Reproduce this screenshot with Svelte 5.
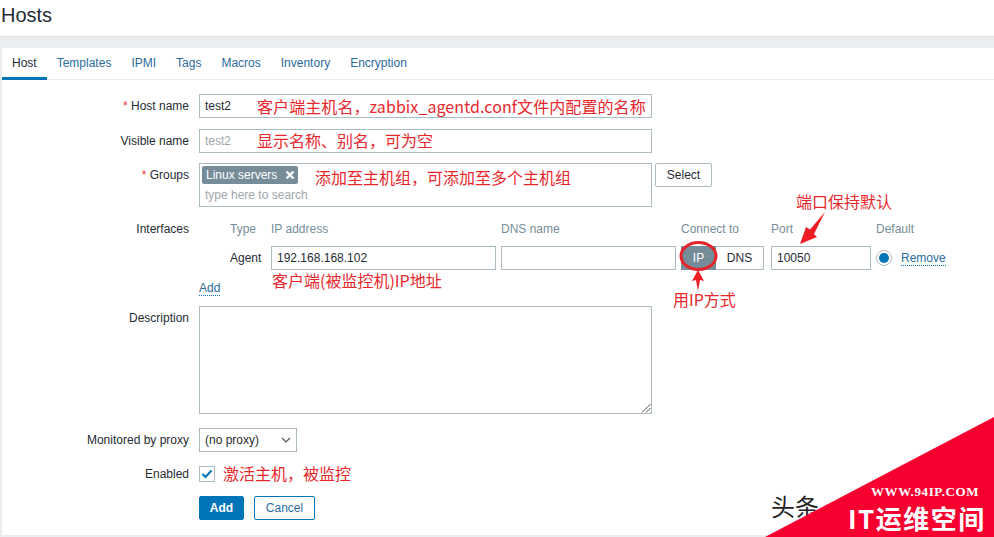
<script>
  const tabs = ['Host', 'Templates', 'IPMI', 'Tags', 'Macros', 'Inventory', 'Encryption'];
</script>

<div class="page">
  <header class="head"><h1>Hosts</h1></header>
  <main class="card">
    <nav class="tabs">
      {#each tabs as t, i}
        <span class="tab" class:active={i === 0}>{t}</span>
      {/each}
    </nav>
    <form class="form">
      <div class="row">
        <span class="label"><i>*</i> Host name</span>
        <span class="input wide">test2</span>
      </div>
      <div class="row tight">
        <span class="label">Visible name</span>
        <span class="input wide ph">test2</span>
      </div>
      <div class="row groups">
        <span class="label"><i>*</i> Groups</span>
        <div class="multi">
          <div class="box">
            <span class="tag">Linux servers
              <svg width="10" height="10" viewBox="0 0 10 10"><path d="M1.5 1.5l7 7M8.5 1.5l-7 7" stroke="#fff" stroke-width="2.4" fill="none"/></svg>
            </span>
            <span class="search">type here to search</span>
          </div>
          <span class="btn-select">Select</span>
        </div>
      </div>
      <div class="row ifaces">
        <span class="label">Interfaces</span>
        <div class="itable">
          <div class="ihead">
            <span></span><span>Type</span><span>IP address</span><span>DNS name</span><span>Connect to</span><span>Port</span><span>Default</span>
          </div>
          <div class="irow">
            <span></span>
            <span class="agent">Agent</span>
            <span class="input ip">192.168.168.102</span>
            <span class="input dns"></span>
            <span class="seg"><b>IP</b><em>DNS</em></span>
            <span class="input port">10050</span>
            <span class="last">
              <span class="radio"><span></span></span>
              <span class="link remove">Remove</span>
            </span>
          </div>
          <span class="link add">Add</span>
        </div>
      </div>
      <div class="row desc">
        <span class="label">Description</span>
        <div class="area">
          <svg width="10" height="10" viewBox="0 0 10 10"><path d="M9.5 1L1 9.5M9.5 5L5 9.5" stroke="#555" fill="none"/></svg>
        </div>
      </div>
      <div class="row proxy">
        <span class="label">Monitored by proxy</span>
        <span class="input sel">(no proxy)
          <svg width="10" height="6" viewBox="0 0 10 6"><path d="M1 1l4 4 4-4" stroke="#555" stroke-width="1.2" fill="none"/></svg>
        </span>
      </div>
      <div class="row enabled">
        <span class="label">Enabled</span>
        <span class="check">
          <svg width="12" height="10" viewBox="0 0 12 10"><path d="M1.5 5l3 3 6-6.5" stroke="#0275b8" stroke-width="2" fill="none"/></svg>
        </span>
      </div>
      <div class="row actions">
        <span></span>
        <div class="btns">
          <span class="primary">Add</span>
          <span class="cancel">Cancel</span>
        </div>
      </div>
    </form>
  </main>
  <div class="foot"></div>

  <span class="note n1">客户端主机名，zabbix_agentd.conf文件内配置的名称</span>
  <span class="note n2">显示名称、别名，可为空</span>
  <span class="note n3">添加至主机组，可添加至多个主机组</span>
  <span class="note n4">客户端(被监控机)IP地址</span>
  <span class="note n5">用IP方式</span>
  <span class="note n6">端口保持默认</span>
  <span class="note n7">激活主机，被监控</span>

  <svg class="marks" width="994" height="537" viewBox="0 0 994 537">
    <ellipse cx="698.5" cy="256" rx="17.5" ry="13.5" fill="none" stroke="#e3242b" stroke-width="3"/>
    <path d="M698 270L704 281L700 280L698 291L696 280L692 281Z" fill="#f01c24"/>
    <path d="M800 244L806 227L810 229.5L825 212L814 234L817 237Z" fill="#f01c24"/>
  </svg>

  <span class="toutiao">头条</span>
  <svg class="corner" width="229" height="120" viewBox="0 0 229 120"><path d="M229 0V120H0z" fill="#f7002f"/></svg>
  <span class="www">WWW.94IP.COM</span>
  <span class="itname">IT运维空间</span>
</div>

<style>
  :global(body) { margin: 0; background: #fff; }
  .page {
    position: relative;
    width: 994px;
    height: 537px;
    overflow: hidden;
    font: 12px/14px "Liberation Sans", Arial, sans-serif;
    color: #1f2c33;
    background: #ebeef0;
    display: flex;
    flex-direction: column;
  }
  .head { height: 37px; background: #fff; border-bottom: 1px solid #e2e5e7; box-sizing: border-box; padding-left: 1px; }
  h1 { margin: 0; font-size: 20px; font-weight: 400; line-height: 30px; }
  .card { margin: 11px 0 0 2px; height: 487px; background: #fff; }
  .tabs { display: flex; height: 32px; box-sizing: border-box; border-bottom: 1px solid #ebeef0; }
  .tab { padding: 8px 10px 0; color: #2a6b9c; height: 32px; box-sizing: border-box; }
  .tab.active { color: #1f2c33; border-bottom: 3px solid #0275b8; }
  .form { padding-top: 14px; }
  .row { display: grid; grid-template-columns: 187px 1fr; column-gap: 10px; align-items: start; margin-bottom: 11px; }
  .tight { margin-bottom: 10px; }
  .label { text-align: right; line-height: 24px; }
  .label i { color: #e33734; font-style: normal; }
  .input {
    display: block;
    box-sizing: border-box;
    height: 24px;
    border: 1px solid #acbbc2;
    padding: 0 5px;
    line-height: 22px;
    background: #fff;
  }
  .wide { width: 453px; }
  .ph { color: #a0a8ac; }
  .groups { height: 44px; margin-bottom: 11px; }
  .groups .label { line-height: 24px; }
  .multi { display: flex; gap: 3px; }
  .box { box-sizing: border-box; width: 453px; height: 44px; border: 1px solid #acbbc2; padding: 2px 2px; }
  .tag {
    display: inline-flex;
    align-items: center;
    gap: 8px;
    background: #768d99;
    color: #fff;
    height: 18px;
    border-radius: 2px;
    padding: 0 3px 0 4px;
  }
  .search { display: block; color: #a0a8ac; padding: 4px 3px 0; }
  .btn-select {
    box-sizing: border-box;
    width: 57px;
    height: 24px;
    border: 1px solid #acbbc2;
    border-radius: 2px;
    text-align: center;
    line-height: 22px;
  }
  .ifaces { margin-bottom: 10px; }
  .ifaces .label { line-height: 22px; height: 22px; }
  .ihead, .irow { display: grid; grid-template-columns: 31px 41px 230px 180px 90px 105px auto; }
  .ihead { color: #768d99; line-height: 22px; height: 22px; margin-bottom: 6px; }
  .agent { line-height: 24px; }
  .ip { width: 225px; }
  .dns { width: 175px; }
  .port { width: 100px; }
  .seg { display: flex; height: 24px; width: 83px; }
  .seg b { width: 35px; background: #768d99; color: #fff; font-weight: 400; text-align: center; line-height: 24px; }
  .seg em { flex: 1; box-sizing: border-box; border: 1px solid #acbbc2; border-left: 0; font-style: normal; text-align: center; line-height: 22px; }
  .last { display: flex; align-items: center; gap: 9px; height: 24px; }
  .radio {
    box-sizing: border-box;
    width: 16px;
    height: 16px;
    border: 1px solid #acbbc2;
    border-radius: 50%;
    display: flex;
    align-items: center;
    justify-content: center;
  }
  .radio span { width: 10px; height: 10px; border-radius: 50%; background: #0275b8; }
  .link { color: #2a6b9c; border-bottom: 1px dotted #0275b8; line-height: 13px; }
  .remove { margin-top: 1px; }
  .add { display: inline-block; margin-top: 12px; }
  .desc { margin-bottom: 14px; }
  .desc .label { line-height: 24px; }
  .area { position: relative; box-sizing: border-box; width: 453px; height: 108px; border: 1px solid #acbbc2; }
  .area svg { position: absolute; right: 0; bottom: 0; }
  .sel { display: flex; align-items: center; justify-content: space-between; width: 98px; padding-right: 5px; margin-bottom: 0; }
  .proxy { margin-bottom: 10px; }
  .enabled { margin-bottom: 10px; }
  .check {
    box-sizing: border-box;
    width: 16px;
    height: 16px;
    margin-top: 4px;
    border: 1px solid #acbbc2;
    display: flex;
    align-items: center;
    justify-content: center;
  }
  .btns { display: flex; gap: 10px; }
  .primary, .cancel { box-sizing: border-box; height: 24px; border-radius: 2px; text-align: center; line-height: 22px; border: 1px solid #0275b8; }
  .primary { width: 45px; background: #0275b8; color: #fff; font-weight: 700; }
  .cancel { width: 61px; color: #2a6b9c; }
  .foot { flex: 1; }

  .note {
    position: absolute;
    color: #e8272c;
    font-family: "Noto Sans CJK SC", sans-serif;
    font-size: 16px;
    line-height: 20px;
    white-space: nowrap;
  }
  .n1 { left: 257px; top: 96px; letter-spacing: 0.08px; }
  .n2 { left: 257px; top: 130px; }
  .n3 { left: 315px; top: 167px; }
  .n4 { left: 272px; top: 270px; }
  .n5 { left: 673px; top: 289px; }
  .n6 { left: 796px; top: 191px; }
  .n7 { left: 223px; top: 463px; }
  .marks { position: absolute; left: 0; top: 0; pointer-events: none; }
  .toutiao {
    position: absolute;
    left: 771px;
    top: 490px;
    font: 400 24px/32px "Noto Sans CJK SC", sans-serif;
    color: #222;
  }
  .corner { position: absolute; right: 0; bottom: 0; }
  .www {
    position: absolute;
    left: 871px;
    top: 485px;
    font: 700 13px/14px "Liberation Serif", serif;
    letter-spacing: 0.6px;
    color: #fff;
  }
  .itname {
    position: absolute;
    left: 848px;
    top: 500px;
    font: 700 26px/36px "Noto Sans CJK SC", sans-serif;
    letter-spacing: 1.5px;
    color: #fff;
    white-space: nowrap;
  }
</style>
